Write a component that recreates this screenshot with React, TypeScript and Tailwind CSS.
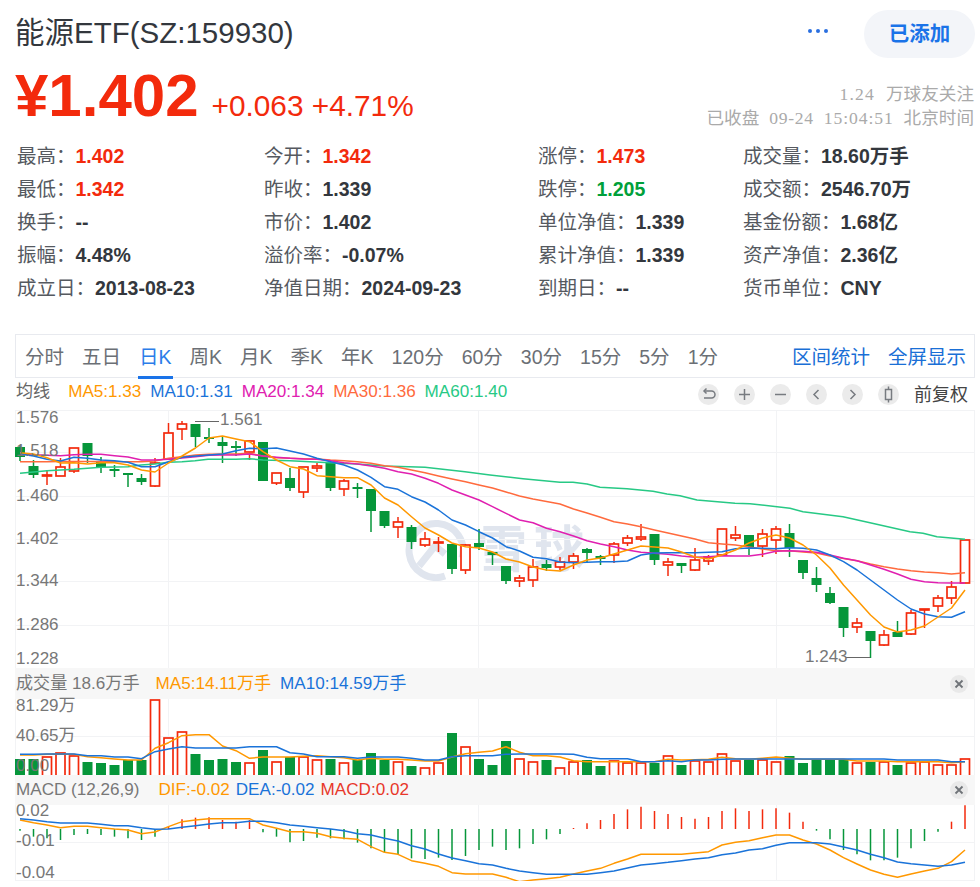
import React from "react";

const RED = "#f32a0c";
const GREEN = "#06963a";
const X = (i: number) => 20 + 13.5 * i;
const pts = (ys: number[]) => ys.map((y, i) => `${X(i)},${y}`).join(" ");

// colour, body top, body bottom, wick top, wick bottom
const K: [string, number, number, number, number][] = [
  ["g",447,457,445,461],["g",466,475,460,478],["r",475,476,470,485],["r",467,476,458,476],["r",448,471,448,473],
  ["g",443,456,443,463],["g",461,467,457,473],["g",469,471,465,477],["g",473,475,473,487],["g",478,482,474,485],
  ["r",463,486,458,487],["r",433,459,423,459],["r",424,429,421,440],["g",424,437,424,447],["g",437,438,428,443],
  ["g",442,446,437,463],["g",446,448,441,456],["r",441,452,441,460],["g",442,481,442,481],["r",473,483,473,485],
  ["g",478,488,468,491],["r",467,492,467,498],["r",466,468,463,472],["g",463,488,462,491],["r",481,489,479,496],
  ["g",487,488,483,498],["g",489,511,489,532],["g",511,526,511,528],["r",522,527,517,538],["g",527,542,525,549],
  ["r",539,545,532,547],["r",542,543,537,552],["g",544,569,544,574],["r",545,570,544,574],["g",543,547,529,550],
  ["g",552,555,552,565],["g",566,581,566,584],["r",578,581,575,587],["r",567,580,559,587],["g",564,568,560,571],
  ["r",562,567,557,570],["r",556,562,553,569],["g",549,553,548,563],["g",556,559,555,565],["r",544,555,542,563],
  ["r",538,543,535,546],["r",537,539,524,541],["g",534,560,534,565],["r",562,565,558,576],["g",563,566,563,573],
  ["r",560,570,548,571],["r",557,561,555,565],["r",529,555,529,555],["r",535,538,526,541],["g",535,547,535,555],
  ["r",534,546,529,557],["r",529,540,526,554],["g",533,548,524,557],["g",560,573,560,579],["g",578,585,567,592],
  ["g",593,603,587,604],["g",607,628,607,637],["r",623,627,618,633],["g",631,641,631,658],["r",635,645,630,646],
  ["g",632,637,621,637],["r",613,634,610,635],["r",609,610,609,628],["r",598,606,595,612],["r",587,598,581,604],
  ["r",540,583,540,583],
];

const MA5 = [452.7,454,457.7,463,462.7,464,462.7,462.7,465,470,472,463,456,448,438,436,439,441.7,451.7,460,466.7,469,475.7,476.7,477.7,477.7,485,498,505,516.7,528,535,543,546.7,548,552,559,562,567,570,571,565,560,558,554,550,546,547,548,552,557,559,555,550,543,538,535,538,545,555,568,585,600,615,627,632,630,626,617,608,590];
const MA10 = [454,456,459.3,461,457.3,458.3,460,460.7,462.3,466.7,466.7,461.7,457.3,456,455,454,450.7,448.3,448.7,448,451,454,458.3,461.7,465,470,477.3,486.7,489.3,496.7,502,510,520,525,531.7,538,546.7,551,557.3,558.7,562,562.7,562.3,561.7,561.7,561,555,553,552.7,552.7,552.7,552.3,551.7,548.7,548,548.3,548.7,547.7,548.3,550,555,561.7,570,580,590,600,609,614,616.7,617.3,611.7];
const MA20 = [454,454.7,455.3,455.7,454.7,454.3,454.3,455.7,457,460,460,459.3,458,456.7,455.3,455,455,454,456,457.3,458.3,459,459.3,460.7,462.7,464,466,468.3,471.7,474,478.3,483.3,490,495,500,506.7,513.3,520,522.7,528.3,531.7,536,540.7,544,546.7,550,552.3,553.3,554.3,556,557.3,556.7,555.7,556,556,554.3,551.3,550.7,551.3,552.3,555,558.3,560.7,565,569.3,574,579.3,581.7,582.7,583,583];
const MA30 = [461.7,461.7,461.7,461.5,461.5,461.5,461.5,461.7,461.7,461.7,461,458.3,456.7,455,454.3,454,454,453.3,456,457.7,458.3,458.7,459,460,460.7,461.7,463.3,465.7,467.3,470,472.7,476,479,481.7,485,488,492,496,499,501.5,504,509,513,517.3,521.7,524,526.7,530,533,536,539,542.7,544,545,547,549,550.7,550.7,552,553,556,558.5,560.7,564,566.7,569,570.7,572,572.7,574,572.7];
const MA60 = "20,473.3 47,470.7 74,469.3 101,467.3 128,466.7 141,465 155,464 168,462.3 182,461.7 195,460.7 208,459.3 236,459.3 249,458.7 263,460 290,460.7 330,462.7 357,464 384,466 425,467.3 465,471.7 490,475 523,478.7 560,482.3 573,482.3 587,484 600,487.3 627,488.7 653,491.3 667,494 680,495.7 697,500 735,503.3 750,503.7 790,508.3 803,511.7 843,516.7 870,522.7 910,531.7 923,533.3 937,536.7 965,539.3";

const VOL: [string, number][] = ([
  "g759","g759","r757","r753","r756","g762","g763","g765","g760","g760","r700","r738","r732","g754","g760","g759","g762","r763","g750","r762","g757","r757","r760","g759","r763","g760","g753","g760","r762","g766","r768","r763","g733","r747","g759","g765","g741","r759","r762","g760","r768","r762","g760","g766","r761","r763","r763","g763","r756","g765","r761","r762","r754","r761","g760","r760","r762","g756","g763","g760","g760","g759","r763","g762","r762","g765","r763","r762","r765","r765","r759",
]).map((s) => [s[0], Number(s.slice(1))] as [string, number]);

const VMA5 = [755,755,754.3,754,754.3,756.7,757.7,759,760,760,748.3,742.7,735.7,734.7,734.7,746,750.7,758.3,757,757,757,756.3,755.7,756.7,757.7,760,758.3,759.3,759.3,760,761,761,757,753.7,752.3,751,746.7,752.3,755.7,755.7,757,760.7,761.7,761.7,761.7,761.7,761.7,761.7,759.3,760,759.7,759.3,757.3,758.7,759.3,758.3,757,758.3,759.3,759.3,759.3,759.3,761,761,761,761.7,761.7,761.7,761.7,762.7,761.7];
const VMA10 = [754.3,754.3,754,754,754,755.7,755.7,757,757,758.7,751.7,749,746.7,748,748,748,748,746.7,746.7,746.7,752.7,754,756.7,756.7,756.7,758.3,757,757,757,758.3,760,760,756.7,755.7,755.7,755.7,754.3,754,754,754,754,754.3,757.3,758.7,758.7,758.7,761.7,761.7,760.7,761.7,760,760,759.3,759,759,759,759,759,759,759,759,759,759,759,759,760,760,760,760,761.7,761.7];

const Z = (z: number) => 665 + z / 3;
const HIST = [497,515,520,525,510,507,510,515,520,525,515,485,463,458,457,465,470,465,502,515,532,528,518,520,523,533,550,563,568,580,582,578,585,573,555,545,555,550,537,523,507,489,475,465,447,433,425,438,447,456,461,456,438,430,438,433,430,443,470,497,523,555,568,586,586,578,550,528,500,470,421];
const DIF = [465,473,480,488,484,484,488,492,495,506,501,485,470,465,461,461,461,461,480,490,500,500,505,515,520,523,545,562,568,587,595,604,623,627,627,627,637,650,645,641,637,627,618,610,595,582,568,568,568,568,564,560,540,532,527,518,510,510,525,537,555,578,597,615,628,637,627,618,610,590,555].map(Z);
const DEA = [461,465,470,474,474,474,478,482,482,488,493,492,487,482,477,473,473,469,469,473,480,484,488,492,497,506,510,520,528,542,552,567,579,587,596,600,610,618,623,628,628,628,628,623,618,609,600,596,592,587,582,578,569,564,555,551,541,533,533,533,537,546,555,568,578,591,596,600,604,600,592].map(Z);

const STATS: [string, string, string?][] = [
  ["最高：","1.402","r"],["最低：","1.342","r"],["换手：","--"],["振幅：","4.48%"],["成立日：","2013-08-23"],
  ["今开：","1.342","r"],["昨收：","1.339"],["市价：","1.402"],["溢价率：","-0.07%"],["净值日期：","2024-09-23"],
  ["涨停：","1.473","r"],["跌停：","1.205","g"],["单位净值：","1.339"],["累计净值：","1.339"],["到期日：","--"],
  ["成交量：","18.60万手"],["成交额：","2546.70万"],["基金份额：","1.68亿"],["资产净值：","2.36亿"],["货币单位：","CNY"],
];

const TABS = ["分时","五日","日K","周K","月K","季K","年K","120分","60分","30分","15分","5分","1分"];

function Grid({ ys, top, bottom }: { ys: number[]; top: number; bottom: number }) {
  return (
    <g stroke="#f2f3f5" strokeWidth="1">
      {ys.map((y) => <line key={y} x1="15" x2="975" y1={y + 0.5} y2={y + 0.5} />)}
      {[168, 478, 776].map((x) => <line key={x} x1={x + 0.5} x2={x + 0.5} y1={top} y2={bottom} />)}
      <line x1="15.5" x2="15.5" y1={top} y2={bottom} />
      <line x1="974.5" x2="974.5" y1={top} y2={bottom} />
    </g>
  );
}

function Line({ d, c, w = 1.5 }: { d: string; c: string; w?: number }) {
  return <polyline points={d} fill="none" stroke={c} strokeWidth={w} strokeLinejoin="round" />;
}

function ToolBtn({ children }: { children: React.ReactNode }) {
  return (
    <span className="flex h-[21px] w-[21px] items-center justify-center rounded-full bg-[#ebebeb]">
      <svg width="21" height="21" viewBox="0 0 21 21" fill="none" stroke="#777b80" strokeWidth="1.5">{children}</svg>
    </span>
  );
}

function CloseBtn() {
  return (
    <span className="ml-auto mr-[7px] flex h-[18px] w-[18px] items-center justify-center rounded-full bg-[#e9e9e9]">
      <svg width="18" height="18" viewBox="0 0 18 18" fill="none" stroke="#6f7378" strokeWidth="1.8"><path d="M5.5 5.5l7 7M12.5 5.5l-7 7" /></svg>
    </span>
  );
}

const labelCls = "absolute left-[1px] leading-[20px] text-[17px] text-[#777]";

export default function App() {
  return (
    <div className="h-[887px] w-[980px] overflow-hidden bg-white text-[#33373d] [font-family:'Liberation_Sans','Noto_Sans_CJK_SC',sans-serif]">
      <div className="flex h-[58px] items-end justify-between pl-[15px] pr-[5px]">
        <h1 className="mb-[8px] text-[29.5px] font-normal leading-[34px] text-[#33373d]">能源ETF(SZ:159930)</h1>
        <div className="flex items-center gap-[36px]">
          <span className="mb-[6px] flex gap-[4px]">
            <i className="h-[4px] w-[4px] rounded-full bg-[#2a6fe0]" />
            <i className="h-[4px] w-[4px] rounded-full bg-[#2a6fe0]" />
            <i className="h-[4px] w-[4px] rounded-full bg-[#2a6fe0]" />
          </span>
          <button className="h-[48px] w-[111px] rounded-[24px] bg-[#f3f5f9] text-[20.5px] font-bold text-[#1a73e8]">已添加</button>
        </div>
      </div>

      <div className="flex h-[72px] items-start justify-between pl-[15px] pr-[6px]">
        <div className="flex items-baseline gap-[13px] pt-[4px]" style={{ color: RED }}>
          <span className="text-[60px] font-bold leading-[68px]">¥1.402</span>
          <span className="text-[29.8px] leading-[34px]">+0.063 +4.71%</span>
        </div>
        <div className="pt-[24px] text-right text-[17.6px] leading-[24px] text-[#aaa]">
          <div><span className="tracking-[1.2px] [font-family:'Liberation_Serif',serif]">1.24</span><span className="ml-[11px]">万球友关注</span></div>
          <div>
            已收盘
            <span className="mx-[10px] tracking-[0.7px] [font-family:'Liberation_Serif',serif]">09-24</span>
            <span className="mr-[10px] tracking-[0.9px] [font-family:'Liberation_Serif',serif]">15:04:51</span>
            北京时间
          </div>
        </div>
      </div>

      <div className="mt-[10px] grid grid-flow-col grid-cols-[247px_274px_205px_1fr] grid-rows-5 pl-[17px]">
        {STATS.map(([a, b, c]) => (
          <div key={a} className="flex h-[33px] items-center whitespace-nowrap text-[19.5px] leading-[33px]">
            <span className="text-[#55595f]">{a}</span>
            <b className={c === "r" ? "font-bold text-[#f32a0c]" : c === "g" ? "font-bold text-[#00a03a]" : "font-bold text-[#33373d]"}>{b}</b>
          </div>
        ))}
      </div>

      <div className="pl-[15px] pr-[5px] pt-[29px]">
        <div className="flex h-[44px] items-center gap-[18px] border border-[#e8eaef] pl-[9px] pr-[8px] pt-[4px] text-[19.5px] text-[#6b6f75]">
          {TABS.map((t) => (
            <span key={t} className={t === "日K" ? "relative text-[#2b7de9] after:absolute after:-bottom-[6px] after:-left-[1px] after:-right-[1px] after:h-[3px] after:bg-[#1a73e8] after:content-['']" : ""}>{t}</span>
          ))}
          <span className="ml-auto text-[#1a6fd6]">区间统计</span>
          <span className="text-[#1a6fd6]">全屏显示</span>
        </div>

        <div className="flex h-[30px] items-center whitespace-nowrap text-[17.1px] leading-[24px]">
          <span className="mb-[3px] ml-[1px] mr-[18px] text-[#666]">均线</span>
          <span className="mb-[3px] mr-[8.8px] text-[#ff9800]">MA5:1.33</span>
          <span className="mb-[3px] mr-[8.8px] text-[#1a73d9]">MA10:1.31</span>
          <span className="mb-[3px] mr-[8.8px] text-[#e020b0]">MA20:1.34</span>
          <span className="mb-[3px] mr-[8.8px] text-[#ff6a3d]">MA30:1.36</span>
          <span className="mb-[3px] text-[#27c985]">MA60:1.40</span>
          <span className="ml-auto flex items-center gap-[15px] pr-[7px] pt-[3px]">
            <ToolBtn><path d="M6.5 7h7a3.5 3.5 0 0 1 0 7H6" /><path d="M8.5 4.5 6 7l2.5 2.5" /></ToolBtn>
            <ToolBtn><path d="M5 10.5h11M10.5 5v11" /></ToolBtn>
            <ToolBtn><path d="M5 10.5h11" /></ToolBtn>
            <ToolBtn><path d="M12.5 6l-4.5 4.5 4.5 4.5" /></ToolBtn>
            <ToolBtn><path d="M8.5 6l4.5 4.5-4.5 4.5" /></ToolBtn>
            <ToolBtn><rect x="7.5" y="5.5" width="6" height="10" /><path d="M10.5 2.5v3M10.5 15.5v3" /></ToolBtn>
            <span className="text-[18px] text-[#444]">前复权</span>
          </span>
        </div>
      </div>

      <div className="relative ml-[15px] mr-[5px] h-[260px]">
        <svg className="absolute left-[390px] top-[112px]" width="62" height="62" viewBox="0 0 62 62" fill="none" stroke="#e0e5ee" strokeWidth="7">
          <path d="M40 56A27 27 0 1 1 57 38" />
          <path d="M14 46 30 26l10 8" />
        </svg>
        <span className="absolute left-[462px] top-[107px] text-[50px] font-bold leading-[70px] tracking-[7px] text-[#e0e5ee]">雪球</span>
        <svg className="absolute inset-0" width="960" height="260" viewBox="15 408 960 260">
          <Grid ys={[410, 452, 496, 539, 581, 625]} top={410} bottom={668} />
          {K.map(([c, t, b, wt, wb], i) => {
            const col = c === "r" ? RED : GREEN;
            return (
              <g key={i}>
                <line x1={X(i)} x2={X(i)} y1={wt} y2={wb} stroke={col} strokeWidth="1.5" />
                {c === "r" ? (
                  <rect x={X(i) - 4.5} y={t} width="9" height={Math.max(b - t, 1)} fill="#fff" stroke={col} strokeWidth="1.7" />
                ) : (
                  <rect x={X(i) - 5} y={t} width="10" height={Math.max(b - t, 2)} fill={col} />
                )}
              </g>
            );
          })}
          <Line d={MA60} c="#27c985" />
          <Line d={pts(MA30)} c="#ff6a3d" />
          <Line d={pts(MA20)} c="#e020b0" />
          <Line d={pts(MA10)} c="#1a73d9" />
          <Line d={pts(MA5)} c="#ff9800" />
          <line x1="195" x2="219" y1="421.5" y2="421.5" stroke="#666" strokeWidth="1" />
          <line x1="846" x2="870" y1="657.5" y2="657.5" stroke="#666" strokeWidth="1" />
        </svg>
        <span className={`${labelCls} top-[0px]`}>1.576</span>
        <span className={`${labelCls} top-[33px]`}>1.518</span>
        <span className={`${labelCls} top-[78px]`}>1.460</span>
        <span className={`${labelCls} top-[121px]`}>1.402</span>
        <span className={`${labelCls} top-[163px]`}>1.344</span>
        <span className={`${labelCls} top-[207px]`}>1.286</span>
        <span className={`${labelCls} top-[241px]`}>1.228</span>
        <span className="absolute left-[205px] top-[2px] text-[17px] leading-[20px] text-[#777]">1.561</span>
        <span className="absolute left-[790px] top-[239px] text-[17px] leading-[20px] text-[#777]">1.243</span>
      </div>

      <div className="ml-[15px] mr-[5px] flex h-[31px] items-center whitespace-nowrap bg-[#f7f7f7] pl-[1px] text-[17.1px]">
        <span className="mr-[16px] text-[#777]">成交量 18.6万手</span>
        <span className="mr-[9px] text-[#ff9800]">MA5:14.11万手</span>
        <span className="text-[#1a73d9]">MA10:14.59万手</span>
        <CloseBtn />
      </div>
      <div className="relative ml-[15px] mr-[5px] h-[76px]">
        <svg className="absolute inset-0" width="960" height="76" viewBox="15 699 960 76">
          <Grid ys={[736]} top={699} bottom={775} />
          {VOL.map(([c, t], i) =>
            c === "r" ? (
              <rect key={i} x={X(i) - 4.5} y={t} width="9" height={790 - t} fill="#fff" stroke={RED} strokeWidth="1.7" />
            ) : (
              <rect key={i} x={X(i) - 5} y={t} width="10" height={775 - t} fill={GREEN} />
            )
          )}
          <Line d={pts(VMA5)} c="#ff9800" />
          <Line d={pts(VMA10)} c="#1a73d9" />
        </svg>
        <span className={`${labelCls} top-[-3px]`}>81.29万</span>
        <span className={`${labelCls} top-[27px]`}>40.65万</span>
        <span className={`${labelCls} top-[57px]`}>0.00</span>
      </div>

      <div className="ml-[15px] mr-[5px] flex h-[30px] items-center whitespace-nowrap bg-[#f7f7f7] pl-[1px] text-[17.1px]">
        <span className="mr-[19px] text-[#777]">MACD (12,26,9)</span>
        <span className="mr-[6px] text-[#ff9800]">DIF:-0.02</span>
        <span className="mr-[6px] text-[#1a73d9]">DEA:-0.02</span>
        <span className="text-[#e8372a]">MACD:0.02</span>
        <CloseBtn />
      </div>
      <div className="relative ml-[15px] mr-[5px] h-[76px]">
        <svg className="absolute inset-0" width="960" height="76" viewBox="15 805 960 76">
          <Grid ys={[842, 880]} top={805} bottom={881} />
          {HIST.map((z, i) => (
            <line key={i} x1={X(i)} x2={X(i)} y1={829} y2={Z(z)} stroke={z < 492 ? RED : GREEN} strokeWidth="1.5" />
          ))}
          <Line d={pts(DIF)} c="#ff9800" />
          <Line d={pts(DEA)} c="#1a73d9" />
        </svg>
        <span className={`${labelCls} top-[-4px]`}>0.02</span>
        <span className={`${labelCls} top-[26px]`}>-0.01</span>
        <span className={`${labelCls} top-[58px]`}>-0.04</span>
      </div>
    </div>
  );
}
